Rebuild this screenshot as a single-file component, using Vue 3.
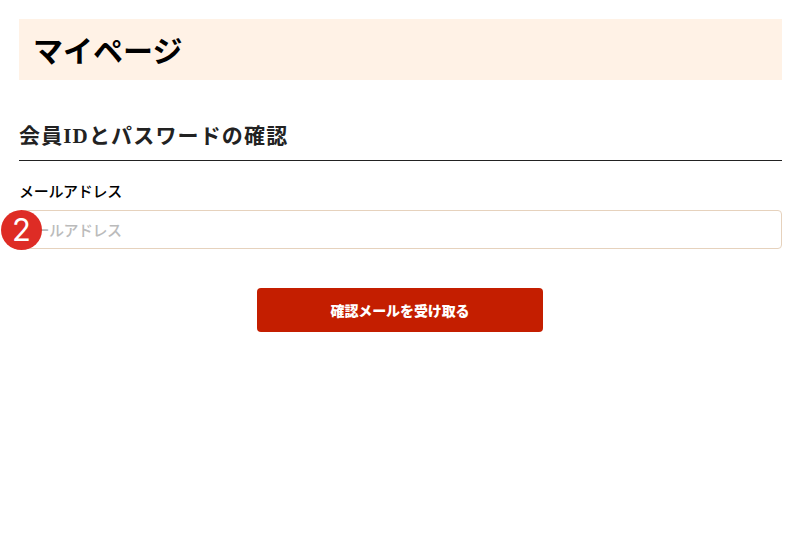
<script setup>
const heading = 'マイページ'
const section = '会員IDとパスワードの確認'
</script>

<template>
  <main class="page">
    <header class="title-bar">
      <h1 class="title">{{ heading }}</h1>
    </header>
    <section class="section">
      <h2 class="section-title">{{ section }}</h2>
      <form class="form" @submit.prevent>
        <label class="label" for="mail">メールアドレス</label>
        <input id="mail" class="input" type="text" placeholder="メールアドレス" />
        <div class="actions">
          <button class="submit" type="submit">確認メールを受け取る</button>
        </div>
      </form>
    </section>
    <span class="badge">2</span>
  </main>
</template>

<style>
html, body { margin: 0; background: #fff; }
</style>

<style scoped>
.page {
  position: relative;
  width: 800px;
  height: 553px;
  box-sizing: border-box;
  padding: 19px 18px 0 19px;
  font-family: "Noto Sans CJK JP", sans-serif;
  color: #111;
  overflow: hidden;
}
.title-bar {
  height: 61px;
  display: flex;
  align-items: center;
  padding: 4px 0 0 14px;
  box-sizing: border-box;
  background: #fff2e6;
}
.title {
  margin: 0;
  font-family: "Liberation Serif", "Noto Sans CJK JP", serif;
  font-size: 30px;
  line-height: 1;
  font-weight: 700;
  color: #000;
}
.section { margin-top: 41px; }
.section-title {
  margin: 0;
  height: 39px;
  border-bottom: 1px solid #222;
  font-family: "Liberation Serif", "Noto Sans CJK JP", serif;
  font-size: 21px;
  line-height: 30px;
  font-weight: 700;
  letter-spacing: 1.15px;
  color: #222;
}
.form { display: flex; flex-direction: column; }
.label {
  margin-top: 20px;
  font-size: 15px;
  line-height: 20px;
  font-weight: 500;
  letter-spacing: -0.3px;
  color: #000;
}
.input {
  margin-top: 9px;
  height: 39px;
  box-sizing: border-box;
  padding: 0;
  border: 1px solid #e6d2bd;
  border-radius: 4px;
  font-family: inherit;
  font-size: 15px;
  font-weight: 500;
  letter-spacing: -0.5px;
  outline: none;
}
.input::placeholder { color: #bbb; }
.actions {
  margin-top: 39px;
  padding-right: 1px;
  display: flex;
  justify-content: center;
}
.submit {
  width: 286px;
  height: 44px;
  border: 0;
  border-radius: 4px;
  background: #c41e00;
  color: #fff;
  font-family: inherit;
  font-size: 14px;
  font-weight: 900;
  letter-spacing: -0.1px;
}
.badge {
  position: absolute;
  left: 1px;
  top: 210px;
  width: 41px;
  height: 40px;
  border-radius: 50%;
  background: #de2c25;
  color: #fff;
  font-family: Inter, sans-serif;
  font-size: 31px;
  font-weight: 400;
  line-height: 40px;
  text-align: center;
}
</style>
